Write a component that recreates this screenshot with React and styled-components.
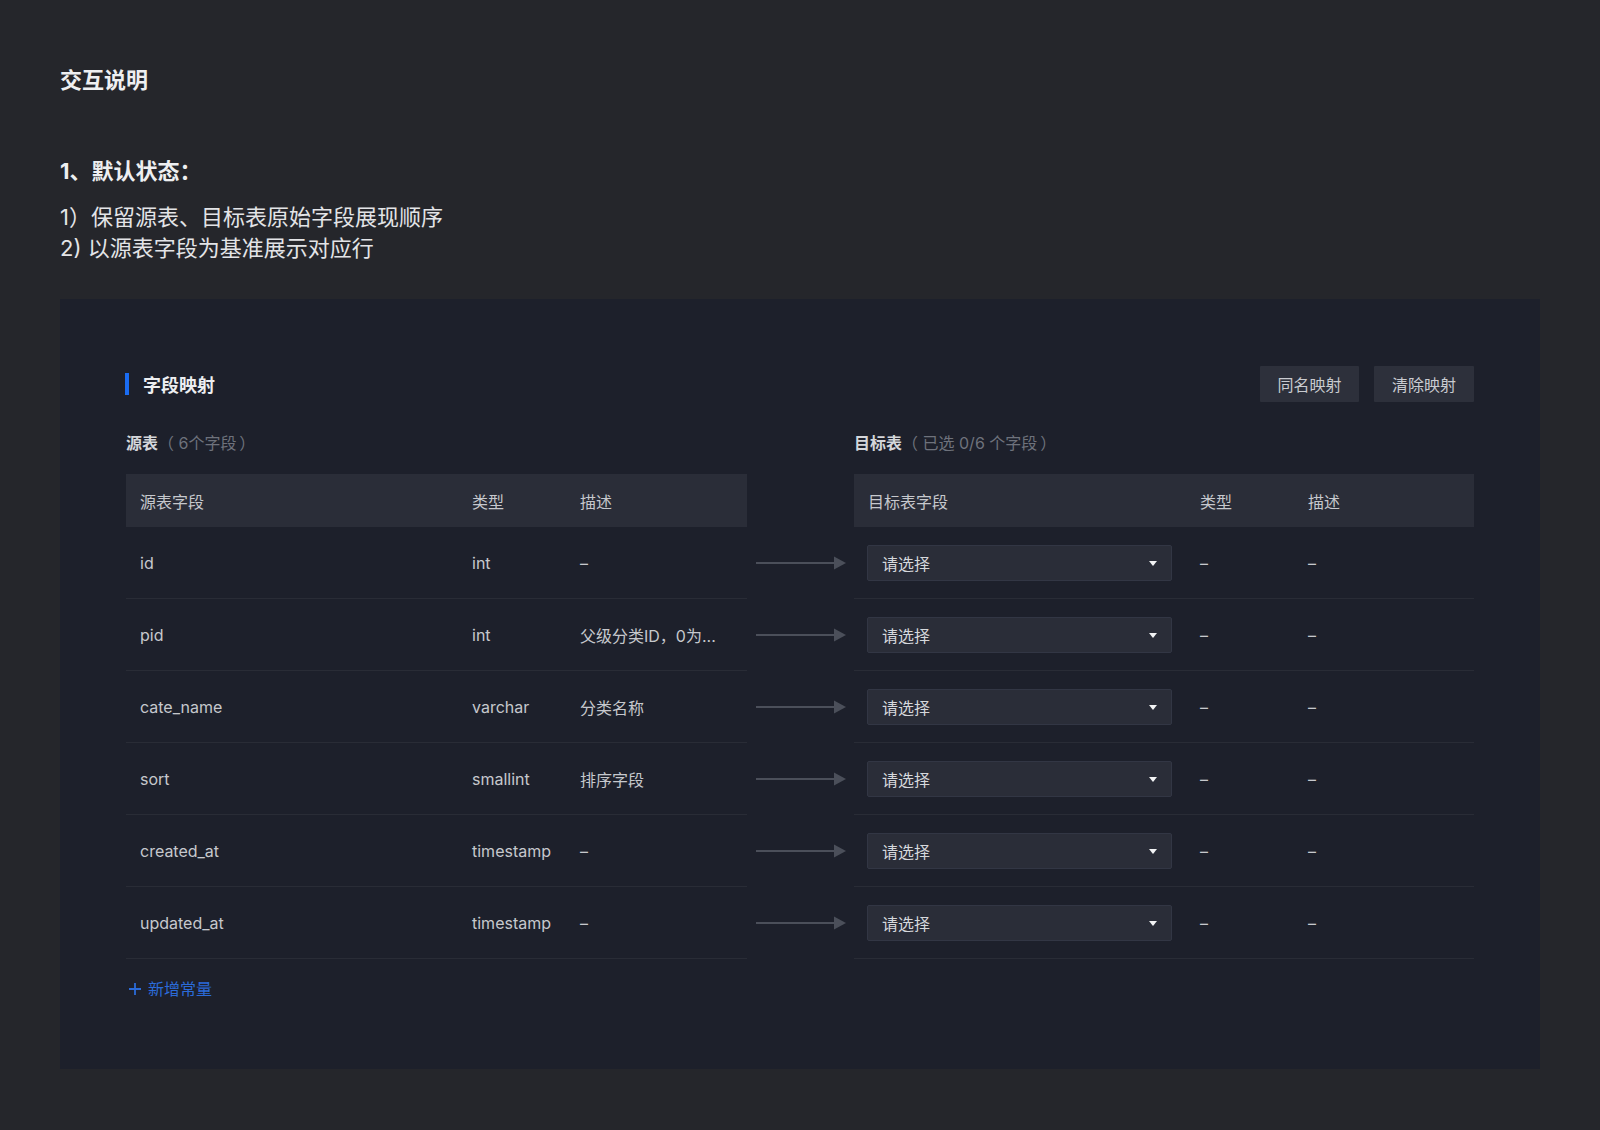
import React from 'react';
import styled, { createGlobalStyle } from 'styled-components';

const GlobalStyle = createGlobalStyle`
  html, body {
    margin: 0;
    padding: 0;
    background: #25262b;
  }
  body {
    font-family: Inter, "Noto Sans CJK SC", sans-serif;
    -webkit-font-smoothing: antialiased;
  }
`;

const Page = styled.div`
  width: 1600px;
  min-height: 1130px;
  box-sizing: border-box;
  padding: 66px 60px 61px;
  background: #25262b;
  color: #e6e7ea;
`;

const PageTitle = styled.h1`
  margin: 0;
  font-size: 22px;
  line-height: 28px;
  font-weight: 700;
  color: #eeeff1;
`;

const SectionTitle = styled.h2`
  margin: 63px 0 0;
  font-size: 22px;
  line-height: 28px;
  font-weight: 700;
  color: #eeeff1;
`;

const Notes = styled.div`
  margin-top: 17px;
  font-size: 22px;
  line-height: 31px;
  color: #e3e4e7;
`;

const Panel = styled.section`
  margin-top: 35px;
  width: 1480px;
  box-sizing: border-box;
  padding: 67px 66px 68px 65px;
  background: #1d202b;
`;

const PanelHead = styled.div`
  display: flex;
  align-items: center;
  justify-content: space-between;
  height: 36px;
`;

const PanelTitle = styled.div`
  display: flex;
  align-items: center;
  gap: 14px;
  font-size: 18px;
  font-weight: 700;
  color: #eceef1;

  &:before {
    content: '';
    width: 4px;
    height: 22px;
    background: #1a6cf2;
  }
`;

const Actions = styled.div`
  display: flex;
  gap: 15px;
`;

const Button = styled.button`
  height: 36px;
  width: ${props => props.w || 100}px;
  border: none;
  border-radius: 1px;
  background: #2d303b;
  color: #c9cbd0;
  font-family: inherit;
  font-size: 16px;
  cursor: pointer;
`;

const Mapping = styled.div`
  display: grid;
  grid-template-columns: 621px 107px 1fr;
  margin-top: 29px;
  margin-left: 1px;
`;

const TableLabel = styled.div`
  font-size: 16px;
  line-height: 24px;
  color: #d4d6da;
  font-weight: 700;
  margin-bottom: 19px;

  span {
    font-weight: 400;
    color: #6e727c;
    white-space: pre;
  }
`;

const HeadRow = styled.div`
  display: grid;
  grid-template-columns: 332px 108px 1fr;
  height: 53px;
  align-items: center;
  background: #2a2d38;
  font-size: 16px;
  color: #c6c8cd;
`;

const Row = styled.div`
  display: grid;
  grid-template-columns: 332px 108px 1fr;
  height: 72px;
  box-sizing: border-box;
  align-items: center;
  border-bottom: 1px solid #292c36;
  font-size: 16px;
  color: #c6c8cd;
`;

const Cell = styled.div`
  padding-left: 14px;
  padding-right: 10px;
  white-space: nowrap;
  overflow: hidden;
  min-width: 0;
`;

const SelectCell = styled.div`
  padding-left: 13px;
`;

const Select = styled.div`
  width: 305px;
  height: 36px;
  box-sizing: border-box;
  display: flex;
  align-items: center;
  justify-content: space-between;
  padding: 0 14px 0 14px;
  background: #2a2d38;
  border: 1px solid #323644;
  border-radius: 2px;
  color: #d6d8dc;
  font-size: 16px;

  &:after {
    content: '';
    border-left: 4px solid transparent;
    border-right: 4px solid transparent;
    border-top: 5px solid #f2f3f5;
    margin-top: 1px;
  }
`;

const ArrowCell = styled.div`
  height: 72px;
  display: flex;
  align-items: center;
  padding-left: 9px;
`;

const AddLink = styled.div`
  display: flex;
  align-items: center;
  gap: 6px;
  margin-top: 18px;
  margin-left: 3px;
  font-size: 16px;
  line-height: 24px;
  color: #2b6bd9;
  cursor: pointer;
`;

const Spacer = styled.div``;

const rows = [
  { name: 'id', type: 'int', desc: '–' },
  { name: 'pid', type: 'int', desc: '父级分类ID，0为...' },
  { name: 'cate_name', type: 'varchar', desc: '分类名称' },
  { name: 'sort', type: 'smallint', desc: '排序字段' },
  { name: 'created_at', type: 'timestamp', desc: '–' },
  { name: 'updated_at', type: 'timestamp', desc: '–' },
];

const Arrow = () => (
  <svg width="92" height="16" viewBox="0 0 92 16">
    <line x1="0" y1="8" x2="80" y2="8" stroke="#4b4f5a" strokeWidth="2" />
    <path d="M78 1.5 L90 8 L78 14.5 Z" fill="#4b4f5a" />
  </svg>
);

const Plus = () => (
  <svg width="14" height="14" viewBox="0 0 14 14">
    <path d="M7 1 V13 M1 7 H13" stroke="#2b6bd9" strokeWidth="1.8" />
  </svg>
);

export default function App() {
  return (
    <Page>
      <GlobalStyle />
      <PageTitle>交互说明</PageTitle>
      <SectionTitle>1、默认状态：</SectionTitle>
      <Notes>
        <div>1）保留源表、目标表原始字段展现顺序</div>
        <div>2) 以源表字段为基准展示对应行</div>
      </Notes>

      <Panel>
        <PanelHead>
          <PanelTitle>字段映射</PanelTitle>
          <Actions>
            <Button w={99}>同名映射</Button>
            <Button w={100}>清除映射</Button>
          </Actions>
        </PanelHead>

        <Mapping>
          <TableLabel>源表<span>（ 6个字段{'\u2009'}）</span></TableLabel>
          <Spacer />
          <TableLabel>目标表<span>（ 已选 0/6 个字段{'\u2009'}）</span></TableLabel>

          <HeadRow>
            <Cell>源表字段</Cell>
            <Cell>类型</Cell>
            <Cell>描述</Cell>
          </HeadRow>
          <Spacer />
          <HeadRow>
            <Cell>目标表字段</Cell>
            <Cell>类型</Cell>
            <Cell>描述</Cell>
          </HeadRow>

          {rows.map(r => (
            <React.Fragment key={r.name}>
              <Row>
                <Cell>{r.name}</Cell>
                <Cell>{r.type}</Cell>
                <Cell>{r.desc}</Cell>
              </Row>
              <ArrowCell>
                <Arrow />
              </ArrowCell>
              <Row>
                <SelectCell>
                  <Select>请选择</Select>
                </SelectCell>
                <Cell>–</Cell>
                <Cell>–</Cell>
              </Row>
            </React.Fragment>
          ))}
        </Mapping>

        <AddLink>
          <Plus />
          新增常量
        </AddLink>
      </Panel>
    </Page>
  );
}
